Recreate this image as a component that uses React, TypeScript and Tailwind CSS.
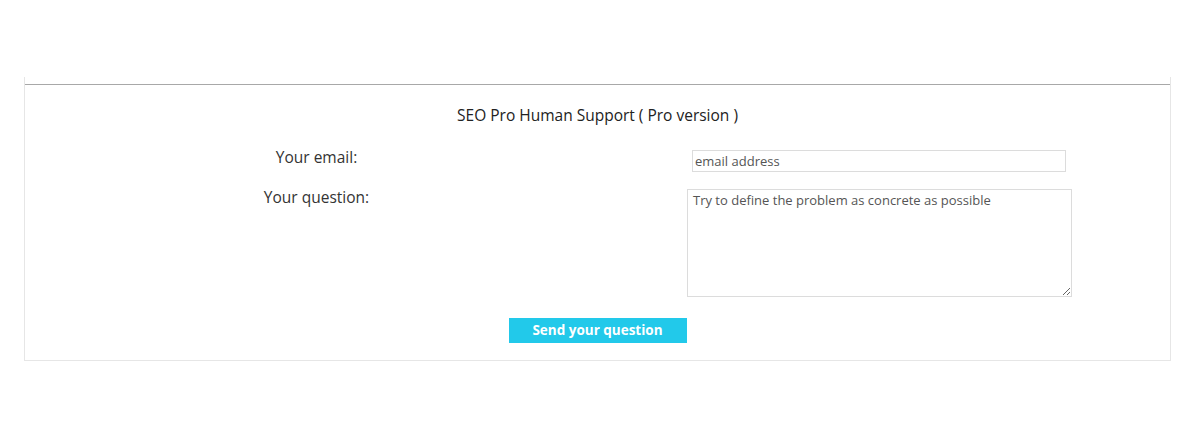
import React from 'react'

const App: React.FC = () => {
  return (
    <div className="w-[1200px] h-[436px] bg-white pl-[24px] pr-[29px] pt-[77px] font-['Open_Sans',sans-serif]">
      <div className="h-[284px] pt-[7px] border-x border-b border-[#e6e6e6]">
        <div className="h-px bg-[#a8a8a8]" />

        <h2 className="mt-[21px] text-center text-[15.5px] leading-[18px] text-[#222]">
          SEO Pro Human Support ( Pro version )
        </h2>

        {/* Form rows */}
        <div className="mt-[23px] flex">
          <div className="w-[583px] text-center text-[15.5px] text-[#333]">
            <div className="h-[20px] leading-[20px]">Your email:</div>
            <div className="h-[20px] leading-[20px] mt-[20px]">Your question:</div>
          </div>
          <div className="flex flex-col">
            <input
              type="text"
              placeholder="email address"
              className="ml-[84px] mt-[3px] w-[374px] h-[22px] border border-[#dcdcdc] px-[2px] text-[13px] text-[#555] placeholder:text-[#555] outline-none"
            />
            <textarea
              placeholder="Try to define the problem as concrete as possible"
              className="ml-[79px] mt-[17px] w-[385px] h-[108px] border border-[#dcdcdc] px-[5px] py-[1px] text-[13px] leading-[18px] text-[#555] placeholder:text-[#555] outline-none"
            />
          </div>
        </div>

        <div className="mt-[21px] flex justify-center">
          <button className="w-[178px] h-[25px] bg-[#22c9ea] text-white text-[13.5px] font-bold leading-[25px]">
            Send your question
          </button>
        </div>
      </div>
    </div>
  )
}

export default App
